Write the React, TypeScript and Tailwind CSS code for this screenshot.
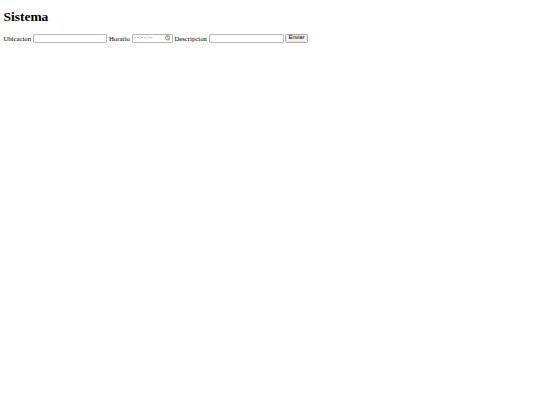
import React from 'react';

// Plain form page, drawn at 0.42 of the browser default sizes
export default function App() {
  return (
    <div className="min-h-[405px] bg-white px-[3.375px] pb-[3.375px] font-['Liberation_Serif',serif] text-black">
      <h1 className="pt-[9.05px] mb-[9.05px] text-[13.5px] font-bold leading-[15.5px]">Sistema</h1>
      <form className="flex items-center gap-[1.7px] text-[6.75px] leading-[9px]">
        <label>Ubicacion</label>
        <input
          type="text"
          className="h-[8.9px] w-[74.5px] rounded-[1px] border border-[#b5b5b5] bg-white px-[1px] font-['Liberation_Sans',sans-serif] text-[5.6px] outline-none"
        />
        <label>Horario</label>
        <div className="flex h-[8.9px] w-[41px] items-center justify-between rounded-[1px] border border-[#b5b5b5] bg-white pl-[1.5px] pr-[1.5px] font-['Liberation_Sans',sans-serif] text-[5.6px] leading-none text-[#333]">
          <span className="tracking-[0.6px]">--:-- --</span>
          <svg width="5.5" height="5.5" viewBox="0 0 16 16" fill="none" stroke="#444" strokeWidth="1.8">
            <circle cx="8" cy="8" r="6.5" />
            <path d="M8 4v4.5l2.8 1.6" />
          </svg>
        </div>
        <label>Descripcion</label>
        <input
          type="text"
          className="h-[8.9px] w-[75px] rounded-[1px] border border-[#b5b5b5] bg-white px-[1px] font-['Liberation_Sans',sans-serif] text-[5.6px] outline-none"
        />
        <button
          type="submit"
          className="flex h-[8.9px] w-[22.5px] items-center justify-center rounded-[1.5px] border border-[#a8a8a8] bg-[#efefef] font-['Liberation_Sans',sans-serif] text-[5.6px] leading-none text-black"
        >
          Enviar
        </button>
      </form>
    </div>
  );
}
